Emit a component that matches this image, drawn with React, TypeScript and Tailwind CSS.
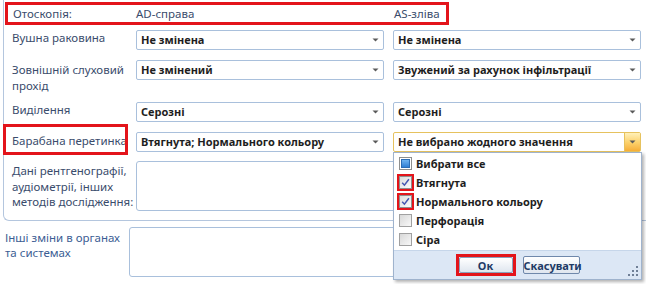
import React from 'react'

const Arrow = () => (
  <svg width="7" height="4" viewBox="0 0 7 4">
    <path d="M0.5 0.5h6L3.5 3.5z" fill="#5a5a5a" />
  </svg>
)

function Combo({ text, active }: { text: string; active?: boolean }) {
  return (
    <div
      className={`h-[20px] w-[248px] flex items-center rounded-[2px] border bg-white ${
        active ? 'border-[#e6c25e]' : 'border-[#a9c0dc]'
      }`}
    >
      <span className="flex-1 pl-[4px] text-[11px] font-bold leading-[16px] text-[#1e1e1e] whitespace-nowrap overflow-hidden">
        {text}
      </span>
      {active ? (
        <div className="w-[16px] h-full flex items-center justify-center border-l border-[#e6c25e] bg-gradient-to-b from-[#fff0b8] via-[#fcd36e] to-[#f6ae35]">
          <Arrow />
        </div>
      ) : (
        <div className="w-[16px] h-full flex items-center justify-center">
          <Arrow />
        </div>
      )}
    </div>
  )
}

function Check({ state }: { state: 'all' | 'on' | 'off' }) {
  if (state === 'all')
    return (
      <span className="w-[13px] h-[13px] border border-[#8e8f8f] bg-white flex items-center justify-center">
        <span className="w-[9px] h-[9px] border border-[#2c6db5] bg-gradient-to-b from-[#6fb3f0] to-[#2f7fd4]" />
      </span>
    )
  if (state === 'on')
    return (
      <span className="-m-[2px] border-[2px] border-[#e3141b] flex">
        <span className="w-[13px] h-[13px] border border-[#8e8f8f] bg-gradient-to-br from-[#dcdcdc] to-[#fbfbfb] flex items-center justify-center">
          <svg width="9" height="9" viewBox="0 0 9 9">
            <path d="M1.2 4.8L3.4 7.2L7.9 1.2" stroke="#4456b0" strokeWidth="1.5" fill="none" />
          </svg>
        </span>
      </span>
    )
  return <span className="w-[13px] h-[13px] border border-[#a0a0a0] bg-gradient-to-br from-[#d8d8d8] to-[#f8f8f8]" />
}

const items: { label: string; state: 'all' | 'on' | 'off' }[] = [
  { label: 'Вибрати все', state: 'all' },
  { label: 'Втягнута', state: 'on' },
  { label: 'Нормального кольору', state: 'on' },
  { label: 'Перфорація', state: 'off' },
  { label: 'Сіра', state: 'off' },
]

export default function App() {
  return (
    <div className="relative w-[646px] h-[284px] overflow-hidden bg-white font-['Noto_Sans',sans-serif] text-[11.5px] text-[#3a4c6c]">
      {/* group box */}
      <div className="ml-[3px] h-[221px] border-l border-b border-[#b4c6de] rounded-bl-[6px] flex flex-col">
        <div className="mt-[2px] ml-[1px] w-[444px] h-[23px] border-[3px] border-[#e3141b] flex items-center leading-[16px]">
          <span className="pl-[5px] w-[128px]">Отоскопія:</span>
          <span className="w-[258px]">AD-справа</span>
          <span>AS-зліва</span>
        </div>

        <div className="mt-[5px] flex items-start">
          <div className="w-[132px] pl-[8px] leading-[16px]">Вушна раковина</div>
          <div className="flex gap-[9px]">
            <Combo text="Не змінена" />
            <Combo text="Не змінена" />
          </div>
        </div>

        <div className="mt-[10px] h-[34px] flex items-start">
          <div className="w-[132px] pl-[8px] pt-[2px] leading-[16px]">
            Зовнішній слуховий
            <br />
            прохід
          </div>
          <div className="flex gap-[9px]">
            <Combo text="Не змінений" />
            <Combo text="Звужений за рахунок інфільтрації" />
          </div>
        </div>

        <div className="mt-[8px] flex items-start">
          <div className="w-[132px] pl-[8px] leading-[16px]">Виділення</div>
          <div className="flex gap-[9px]">
            <Combo text="Серозні" />
            <Combo text="Серозні" />
          </div>
        </div>

        <div className="mt-[10px] flex items-start">
          <div className="relative w-[132px] pl-[8px] pt-[1px] leading-[16px] whitespace-nowrap">
            Барабана перетинка
            <span className="absolute left-[-1px] top-[-8px] w-[125px] h-[31px] border-[3px] border-[#e3141b]" />
          </div>
          <div className="flex gap-[9px]">
            <Combo text="Втягнута; Нормального кольору" />
            <Combo text="Не вибрано жодного значення" active />
          </div>
        </div>

        <div className="mt-[9px] flex items-start">
          <div className="w-[132px] pl-[8px] pt-[2px] leading-[15.5px] whitespace-nowrap">
            Дані рентгенографії,
            <br />
            аудіометрії, інших
            <br />
            методів дослідження:
          </div>
          <div className="w-[505px] h-[50px] border border-[#a9c0dc] rounded-[3px] bg-white" />
        </div>
      </div>

      <div className="mt-[6px] flex items-start">
        <div className="w-[126px] pl-[5px] pt-[3px] leading-[15px] text-[#3b5d93] whitespace-nowrap">
          Інші зміни в органах
          <br />
          та системах
        </div>
        <div className="ml-[3px] w-[512px] h-[50px] border border-[#a9c0dc] rounded-[3px] bg-white" />
      </div>

      {/* dropdown popup */}
      <div className="absolute left-[393px] top-[152px] w-[249px] h-[128px] flex flex-col border border-[#9fb3cd] bg-white shadow-[2px_2px_3px_rgba(0,0,0,0.3)]">
        <div className="pt-[1px] flex flex-col">
          {items.map((it) => (
            <div key={it.label} className="h-[19px] pl-[5px] flex items-center gap-[4px]">
              <Check state={it.state} />
              <span className="text-[11px] font-bold leading-[16px] text-[#1e1e1e]">{it.label}</span>
            </div>
          ))}
        </div>
        <div className="relative flex-1 mt-[1px] border-t border-[#c6d6ea] bg-[#dce7f5] flex items-center justify-center gap-[7px]">
          <div className="border-[3px] border-[#e3141b] flex">
            <button className="w-[54px] h-[16px] border border-[#8aa0bd] rounded-[2px] bg-gradient-to-b from-white to-[#dfe6ef] text-[11px] font-bold leading-none text-[#1e3b66]">
              Ок
            </button>
          </div>
          <button className="w-[57px] h-[18px] border border-[#6f88ab] rounded-[2px] bg-gradient-to-b from-white to-[#dfe6ef] text-[11px] font-bold leading-none text-[#1e3b66]">
            Скасувати
          </button>
          <svg className="absolute right-[3px] bottom-[3px]" width="10" height="10" viewBox="0 0 10 10">
            <g fill="#6f7f96">
              <rect x="8" y="0" width="2" height="2" />
              <rect x="4" y="4" width="2" height="2" />
              <rect x="8" y="4" width="2" height="2" />
              <rect x="0" y="8" width="2" height="2" />
              <rect x="4" y="8" width="2" height="2" />
              <rect x="8" y="8" width="2" height="2" />
            </g>
          </svg>
        </div>
      </div>
    </div>
  )
}
